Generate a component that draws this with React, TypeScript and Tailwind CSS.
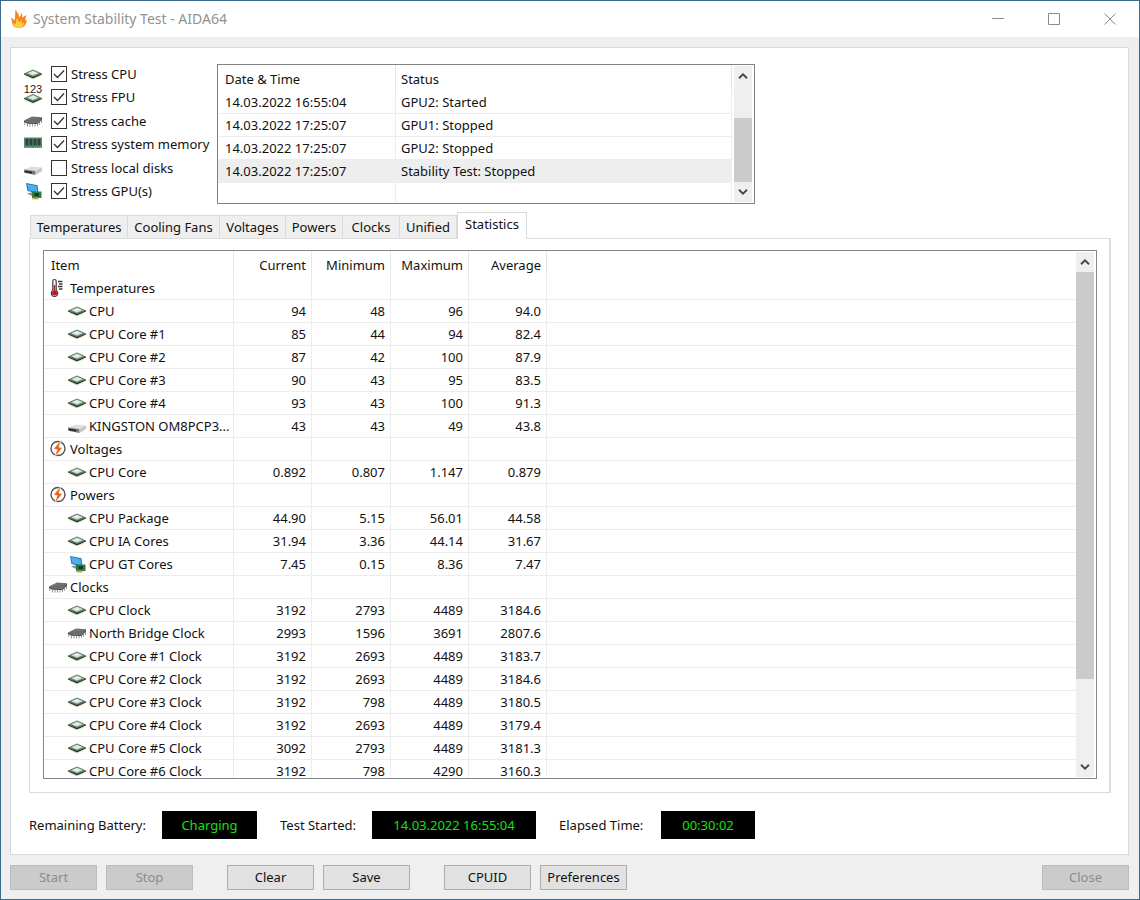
import { useState } from "react";
import type { ReactNode } from "react";
import clsx from "clsx";

type IconName = "chip" | "fpu" | "cache" | "memory" | "disk" | "gpu" | "temp" | "power";

interface StatRow {
  icon: IconName;
  name: string;
  values?: string[];
}

const stressOptions: { id: string; icon: IconName; label: string; checked: boolean }[] = [
  { id: "cpu", icon: "chip", label: "Stress CPU", checked: true },
  { id: "fpu", icon: "fpu", label: "Stress FPU", checked: true },
  { id: "cache", icon: "cache", label: "Stress cache", checked: true },
  { id: "memory", icon: "memory", label: "Stress system memory", checked: true },
  { id: "disks", icon: "disk", label: "Stress local disks", checked: false },
  { id: "gpu", icon: "gpu", label: "Stress GPU(s)", checked: true },
];

const logEntries = [
  { time: "14.03.2022 16:55:04", status: "GPU2: Started" },
  { time: "14.03.2022 17:25:07", status: "GPU1: Stopped" },
  { time: "14.03.2022 17:25:07", status: "GPU2: Stopped" },
  { time: "14.03.2022 17:25:07", status: "Stability Test: Stopped" },
];

const tabs = [
  { label: "Temperatures", width: "w-[98px]" },
  { label: "Cooling Fans", width: "w-[92px]" },
  { label: "Voltages", width: "w-[66px]" },
  { label: "Powers", width: "w-[57px]" },
  { label: "Clocks", width: "w-[57px]" },
  { label: "Unified", width: "w-[57px]" },
  { label: "Statistics", width: "w-[70px]" },
];

const stats: StatRow[] = [
  { icon: "temp", name: "Temperatures" },
  { icon: "chip", name: "CPU", values: ["94", "48", "96", "94.0"] },
  { icon: "chip", name: "CPU Core #1", values: ["85", "44", "94", "82.4"] },
  { icon: "chip", name: "CPU Core #2", values: ["87", "42", "100", "87.9"] },
  { icon: "chip", name: "CPU Core #3", values: ["90", "43", "95", "83.5"] },
  { icon: "chip", name: "CPU Core #4", values: ["93", "43", "100", "91.3"] },
  { icon: "disk", name: "KINGSTON OM8PCP3...", values: ["43", "43", "49", "43.8"] },
  { icon: "power", name: "Voltages" },
  { icon: "chip", name: "CPU Core", values: ["0.892", "0.807", "1.147", "0.879"] },
  { icon: "power", name: "Powers" },
  { icon: "chip", name: "CPU Package", values: ["44.90", "5.15", "56.01", "44.58"] },
  { icon: "chip", name: "CPU IA Cores", values: ["31.94", "3.36", "44.14", "31.67"] },
  { icon: "gpu", name: "CPU GT Cores", values: ["7.45", "0.15", "8.36", "7.47"] },
  { icon: "cache", name: "Clocks" },
  { icon: "chip", name: "CPU Clock", values: ["3192", "2793", "4489", "3184.6"] },
  { icon: "cache", name: "North Bridge Clock", values: ["2993", "1596", "3691", "2807.6"] },
  { icon: "chip", name: "CPU Core #1 Clock", values: ["3192", "2693", "4489", "3183.7"] },
  { icon: "chip", name: "CPU Core #2 Clock", values: ["3192", "2693", "4489", "3184.6"] },
  { icon: "chip", name: "CPU Core #3 Clock", values: ["3192", "798", "4489", "3180.5"] },
  { icon: "chip", name: "CPU Core #4 Clock", values: ["3192", "2693", "4489", "3179.4"] },
  { icon: "chip", name: "CPU Core #5 Clock", values: ["3092", "2793", "4489", "3181.3"] },
  { icon: "chip", name: "CPU Core #6 Clock", values: ["3192", "798", "4290", "3160.3"] },
];

function ChipShape() {
  return (
    <>
      <path d="M1 9.5 10 5.5l9 4-9 4z" fill="#5f7a62" />
      <path d="M1 9.500v1l9 4 9-4v-1l-9 3.500z" fill="#25331f" />
      <path d="M2.500 12 10 15l7.500-3" stroke="#c9bd62" strokeWidth=".8" strokeDasharray="1 1" fill="none" />
      <path d="M4 9.200 10 6.500l6 2.700-6 2.600z" fill="#c9d9d3" />
      <path d="M6.500 9 10 7.400l3.500 1.400L10 10.500z" fill="#e6efec" />
    </>
  );
}

function Icon({ name }: { name: IconName }) {
  const shapes: Record<IconName, ReactNode> = {
    chip: <ChipShape />,
    fpu: (
      <g transform="translate(0 1.5)">
        <ChipShape />
      </g>
    ),
    cache: (
      <>
        <path d="M1 9.500 9 5.500l10 .8-4.500 5.200-10-.3z" fill="#6b6b6d" />
        <path d="M1 9.500l3.500 1.700 10 .3L19 6.300v2.200l-4.500 4.500-10-.3L1 11z" fill="#414143" />
        <path d="M1.800 11v3M4.500 12.500v3M7 12.700v2.800M9.500 12.800v2.700M12 13v2.500M14.500 12.500V15M16.500 10.800v3M18.500 9v3" stroke="#8b8b8b" strokeWidth=".9" />
        <path d="M6 8.500 9.500 6.800l5 .4" stroke="#848486" strokeWidth=".7" fill="none" />
      </>
    ),
    memory: (
      <>
        <path d="M1 3.500h18V14H1z" fill="#4f9068" />
        <path d="M2.500 4.800h3v6.700h-3zM6.500 4.800h3v6.700h-3zM10.500 4.800h3v6.700h-3zM14.500 4.800h3v6.700h-3z" fill="#33413c" />
        <path d="M1.500 13.500h7.500M11 13.500h7.500" stroke="#a9a878" strokeWidth="1.200" strokeDasharray="1 1" />
      </>
    ),
    disk: (
      <>
        <path d="M1 11.500 8 8.500l11 1L12.500 13z" fill="#e0e0e0" />
        <path d="M1 11.500 12.500 13v4L1 14.800z" fill="#767676" />
        <path d="M2 12.800l7 .9v1.800l-7-1.200z" fill="#242424" />
        <path d="M12.500 13 19 9.500V13l-6.500 4z" fill="#c4c4c4" />
      </>
    ),
    gpu: (
      <>
        <path d="M3 2 14.500 4.300l1 8.200L4.500 10z" fill="#1f6fae" />
        <path d="M4 3 13.600 5l.8 6.200-9-1.900z" fill="#4ab1f1" />
        <path d="M4 12.500l6-1.500v4.500z" fill="#8b9297" />
        <path d="M9 10.500h9.500v6.500H9z" fill="#2e7a4b" />
        <path d="M11.500 12h4.500v3.200h-4.500z" fill="#143f28" />
        <path d="M9.500 17.500h6" stroke="#d3a73c" strokeWidth="1.800" />
      </>
    ),
    temp: (
      <>
        <path d="M4.800 3.200a1.700 1.700 0 0 1 3.400 0v9.300a3.200 3.200 0 1 1-3.400 0z" fill="#fff" stroke="#3a3a3a" strokeWidth="1.200" />
        <path d="M6.500 7v7" stroke="#a81e28" strokeWidth="1.500" />
        <circle cx="6.500" cy="15" r="2.500" fill="#c01428" />
        <path d="M10 3.500h4.500M11 6h3.500M10 8.500h4.500M11 11h3.500" stroke="#3d3d3d" strokeWidth="1.300" />
      </>
    ),
    power: (
      <>
        <circle cx="10" cy="9.500" r="7" fill="#fff" stroke="#505050" strokeWidth="1.400" />
        <path d="M13.500.5 5.500 9.800l3.600.7L6.500 18.500l8-9.800-3.600-.7z" fill="#e2691c" stroke="#fff" strokeWidth=".6" />
      </>
    ),
  };

  return (
    <span className="relative block h-5 w-5 shrink-0">
      <svg viewBox="0 0 20 20" className="h-5 w-5" aria-hidden="true">
        {shapes[name]}
      </svg>
      {name === "fpu" && (
        <span className="absolute inset-x-0 -top-1 text-center font-['Liberation_Sans',sans-serif] text-[11px] leading-3 text-[#222]">
          123
        </span>
      )}
    </span>
  );
}

function FlameIcon() {
  return (
    <svg viewBox="0 0 18 20" className="h-5 w-[18px]" aria-hidden="true">
      <path
        d="M9 19C5.500 19 3 17.500 2.300 14.500 1.900 12 1.500 10.300.8 8.700c1.600.6 2.800 1.500 3.800 2.700C5.200 7.500 5.400 4 5.200.8c2.300 2.200 3.600 4.700 4.200 7.700 1.300-1.700 2-3.300 2.400-5 .6 1.900.6 3.600.4 5.500 1.400-1.200 2.800-2.300 4.400-3-.9 2-1.200 3.600-1.300 5.500.5-.2.9-.3 1.500-.3C16.200 16 13.500 19 9 19z"
        fill="#f5861f"
      />
      <path
        d="M9 19c-3.500 0-5.500-2-5.500-5 1 .3 1.800.8 2.300 1.500.2-3 .5-5 1.200-6.500 1 1.600 1.600 3 1.900 4.600.8-1 1.600-1.800 2.700-2.300 0 1.400.1 2.300.4 3.200l2-1.200C13.800 16.800 12 19 9 19z"
        fill="#ffcf3f"
      />
    </svg>
  );
}

function Scrollbar({ label, before, thumb }: { label: string; before: string; thumb: string }) {
  return (
    <div className="my-px mr-0.5 flex w-[18px] shrink-0 flex-col bg-[#efefef]" role="group" aria-label={label}>
      <button type="button" aria-label="Scroll up" className="flex h-5 shrink-0 items-center justify-center">
        <svg viewBox="0 0 10 6" className="h-1.5 w-2.5">
          <path d="M1 5.200 5 1.300l4 3.900" fill="none" stroke="#484848" strokeWidth="1.900" />
        </svg>
      </button>
      <div className="min-h-0 flex-1">
        <div className={before} />
        <div className={clsx("bg-[#cbcbcb]", thumb)} />
      </div>
      <button type="button" aria-label="Scroll down" className="flex h-5 shrink-0 items-center justify-center">
        <svg viewBox="0 0 10 6" className="h-1.5 w-2.5">
          <path d="m1 .8 4 3.900L9 .8" fill="none" stroke="#484848" strokeWidth="1.900" />
        </svg>
      </button>
    </div>
  );
}

function PushButton({ children, disabled = false }: { children: ReactNode; disabled?: boolean }) {
  return (
    <button
      type="button"
      disabled={disabled}
      className="h-[25px] w-[87px] border border-[#adadad] bg-[#e1e1e1] text-center leading-[23px] disabled:border-[#bcbcbc] disabled:bg-[#cbcbcb] disabled:text-[#8b8b8b]"
    >
      {children}
    </button>
  );
}

interface ReadoutProps {
  id: string;
  label: string;
  value: string;
  labelWidth: string;
  width: string;
}

function Readout({ id, label, value, labelWidth, width }: ReadoutProps) {
  return (
    <div className="flex items-center">
      <label htmlFor={id} className={clsx("whitespace-nowrap", labelWidth)}>
        {label}
      </label>
      <output id={id} className={clsx("block h-7 bg-black text-center leading-7 text-[#12e312]", width)}>
        {value}
      </output>
    </div>
  );
}

const cell = "border-b border-r border-[#ededed] p-0 leading-[14px]";
const headCell = "border-r border-[#e5e5e5] p-0 pt-px font-normal";

export default function App() {
  const [checked, setChecked] = useState<Record<string, boolean>>(
    Object.fromEntries(stressOptions.map((option) => [option.id, option.checked])),
  );
  const [activeTab, setActiveTab] = useState("Statistics");

  return (
    <div className="flex h-screen flex-col overflow-hidden border border-[#3b6a8c] bg-[#efefef] font-['Noto_Sans','Open_Sans',sans-serif] text-[13px] leading-5 text-[#111]">
      <header className="flex h-9 shrink-0 items-center bg-white pl-[9px] pr-px">
        <FlameIcon />
        <h1 className="ml-[5px] flex-1 text-[14px] text-[#929292]">System Stability Test - AIDA64</h1>
        <div className="flex h-full">
          <button type="button" aria-label="Minimize" className="flex w-14 items-center justify-center">
            <svg viewBox="0 0 12 12" className="h-3 w-3">
              <path d="M0 5.500h12" stroke="#8a8a8a" />
            </svg>
          </button>
          <button type="button" aria-label="Maximize" className="flex w-14 items-center justify-center">
            <svg viewBox="0 0 12 12" className="h-3 w-3">
              <path d="M.5.500h11v11H.5z" fill="none" stroke="#8a8a8a" />
            </svg>
          </button>
          <button type="button" aria-label="Close window" className="flex w-14 items-center justify-center">
            <svg viewBox="0 0 12 12" className="h-3 w-3">
              <path d="m.5.500 11 11M11.500.5l-11 11" fill="none" stroke="#8a8a8a" />
            </svg>
          </button>
        </div>
      </header>

      <main className="mx-[9px] mr-2.5 mt-2.5 flex min-h-0 flex-1 flex-col border border-[#d9d9d9] bg-white">
        <section className="flex pt-4">
          <div className="-mt-0.5 flex h-[141px] w-[206px] shrink-0 flex-col pl-3">
            {stressOptions.map((option) => (
              <div key={option.id} className="flex flex-1 items-center">
                <Icon name={option.icon} />
                <label htmlFor={option.id} className="relative ml-2 flex items-center whitespace-nowrap">
                  <input
                    id={option.id}
                    type="checkbox"
                    checked={checked[option.id]}
                    onChange={(e) => setChecked({ ...checked, [option.id]: e.target.checked })}
                    className="peer mr-1 h-4 w-4 shrink-0 appearance-none border border-[#333] bg-white"
                  />
                  <svg viewBox="0 0 16 16" className="pointer-events-none absolute left-0 hidden h-4 w-4 peer-checked:block">
                    <path d="m3 8 3.500 3.500L13 4.500" fill="none" stroke="#333" strokeWidth="1.300" />
                  </svg>
                  {option.label}
                </label>
              </div>
            ))}
          </div>

          <div className="flex h-[140px] w-[538px] border border-[#828282]">
            <div className="flex min-w-0 flex-1 flex-col pr-0.5">
              <table className="w-full table-fixed border-separate border-spacing-0 text-left">
                <thead>
                  <tr className="h-[26px]">
                    <th className={clsx(headCell, "w-[178px] pl-[7px]")}>Date &amp; Time</th>
                    <th className={clsx(headCell, "pl-[5px]")}>Status</th>
                  </tr>
                </thead>
                <tbody>
                  {logEntries.map((entry, index) => (
                    <tr key={index} className={clsx("h-[23px]", index === logEntries.length - 1 && "bg-[#eeeeee]")}>
                      <td className={clsx(cell, "pl-[7px]")}>{entry.time}</td>
                      <td className={clsx(cell, "pl-[5px]")}>{entry.status}</td>
                    </tr>
                  ))}
                </tbody>
              </table>
              <div className="flex flex-1">
                <div className="w-[178px] border-r border-[#ededed]" />
                <div className="flex-1 border-r border-[#ededed]" />
              </div>
            </div>
            <Scrollbar label="Log scroll" before="h-[33%]" thumb="h-[67%]" />
          </div>
        </section>

        <section className="ml-[18px] mr-[17px] mt-2 flex min-h-0 flex-1 flex-col">
          <div role="tablist" className="ml-px flex h-[26px] items-end">
            {tabs.map((tab) => (
              <button
                key={tab.label}
                type="button"
                role="tab"
                aria-selected={activeTab === tab.label}
                onClick={() => setActiveTab(tab.label)}
                className={clsx(
                  "whitespace-nowrap border-r border-t border-[#dadada] text-center",
                  tab.width,
                  activeTab === tab.label
                    ? "relative z-10 -mb-px h-[27px] border-l bg-white pb-1"
                    : "h-[23px] bg-[#efefef] first:border-l",
                )}
              >
                {tab.label}
              </button>
            ))}
          </div>

          <div className="flex min-h-0 flex-1 border border-r-2 border-[#dcdcdc] px-[13px] pb-[13px] pr-3 pt-[11px]">
            <div className="flex min-w-0 flex-1 border border-[#828790]">
              <div className="min-w-0 flex-1 overflow-hidden">
                <table className="w-full table-fixed border-separate border-spacing-0">
                  <thead>
                    <tr className="h-[26px]">
                      <th className={clsx(headCell, "w-[190px] pl-[7px] text-left")}>Item</th>
                      <th className={clsx(headCell, "w-[78px] pr-[5px] text-right")}>Current</th>
                      <th className={clsx(headCell, "w-[79px] pr-[5px] text-right")}>Minimum</th>
                      <th className={clsx(headCell, "w-[78px] pr-[5px] text-right")}>Maximum</th>
                      <th className={clsx(headCell, "w-[78px] pr-[5px] text-right")}>Average</th>
                      <td className="p-0" />
                    </tr>
                  </thead>
                  <tbody>
                    {stats.map((row) => (
                      <tr key={row.name} className="h-[23px]">
                        <td className={cell}>
                          <div className={clsx("flex items-center", row.values ? "pl-[23px]" : "pl-1")}>
                            <Icon name={row.icon} />
                            <span className="ml-0.5 whitespace-nowrap">{row.name}</span>
                          </div>
                        </td>
                        {[0, 1, 2, 3].map((col) => (
                          <td key={col} className={clsx(cell, "pr-[5px] text-right")}>
                            {row.values?.[col]}
                          </td>
                        ))}
                        <td className="border-b border-[#ededed] p-0" />
                      </tr>
                    ))}
                  </tbody>
                </table>
              </div>
              <Scrollbar label="Statistics scroll" before="h-0" thumb="h-[84%]" />
            </div>
          </div>
        </section>

        <section className="ml-[18px] flex h-[61px] shrink-0 items-center gap-[23px] pt-0.5">
          <Readout id="battery" label="Remaining Battery:" value="Charging" labelWidth="w-[133px]" width="w-[95px]" />
          <Readout id="started" label="Test Started:" value="14.03.2022 16:55:04" labelWidth="w-[92px]" width="w-[164px]" />
          <Readout id="elapsed" label="Elapsed Time:" value="00:30:02" labelWidth="w-[102px]" width="w-[94px]" />
        </section>
      </main>

      <footer className="ml-[9px] mr-2.5 flex h-11 shrink-0 items-center justify-between">
        <div className="flex gap-[34px]">
          <div className="flex gap-[9px]">
            <PushButton disabled>Start</PushButton>
            <PushButton disabled>Stop</PushButton>
          </div>
          <div className="flex gap-[9px]">
            <PushButton>Clear</PushButton>
            <PushButton>Save</PushButton>
          </div>
          <div className="flex gap-[9px]">
            <PushButton>CPUID</PushButton>
            <PushButton>Preferences</PushButton>
          </div>
        </div>
        <PushButton disabled>Close</PushButton>
      </footer>
    </div>
  );
}
